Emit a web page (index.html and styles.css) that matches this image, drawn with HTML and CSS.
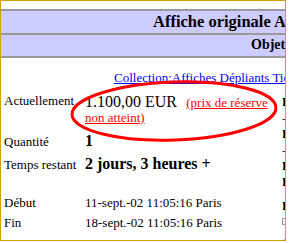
FILE: index.html
```html
<!DOCTYPE html>
<html lang="fr">
<head>
    <meta charset="UTF-8">
    <title>Affiche originale</title>
    <link rel="stylesheet" href="styles.css">
</head>
<body>
    <div class="frame">
        <div class="page">
            <div class="banner">
                <div class="banner-title">Affiche originale Air France</div>
                <div class="banner-sub">Objet n° 1658402937</div>
            </div>

            <div class="links">
                <a href="#">Collection:Affiches Dépliants Tickets</a>
            </div>

            <div class="details">
                <div class="main">
                    <div class="row row-price">
                        <div class="label">Actuellement</div>
                        <div class="value"><span class="big">1.100,00 EUR</span> <a class="reserve" href="#">(prix de réserve non atteint)</a></div>
                    </div>
                    <div class="row row-qty">
                        <div class="label">Quantité</div>
                        <div class="value"><b class="big">1</b></div>
                    </div>
                    <div class="row row-time">
                        <div class="label">Temps restant</div>
                        <div class="value"><b class="big">2 jours, 3 heures +</b></div>
                    </div>
                    <div class="row row-start">
                        <div class="label">Début</div>
                        <div class="value">11-sept.-02 11:05:16 Paris</div>
                    </div>
                    <div class="row row-end">
                        <div class="label">Fin</div>
                        <div class="value">18-sept.-02 11:05:16 Paris</div>
                    </div>
                </div>

                <div class="side">
                    <div class="side-line"><b>Enchères</b></div>
                    <div class="side-line small">- vendeur</div>
                    <div class="side-line"><b>Lieu</b></div>
                    <div class="side-line small">- France</div>
                    <div class="side-line"><b>Pays</b></div>
                    <div class="side-line"><b>Historique</b></div>
                    <div class="side-line gap"><b>Livraison</b></div>
                    <div class="side-box"></div>
                    <div class="side-icon">&#9686;</div>
                </div>
            </div>
        </div>
    </div>

    <!-- red mark drawn over the price -->
    <svg class="circle" width="290" height="243" viewBox="0 0 290 243">
        <ellipse cx="174" cy="111" rx="102" ry="29" transform="rotate(-2 174 111)"
                 fill="none" stroke="#ff0000" stroke-width="3"/>
    </svg>
</body>
</html>
```

FILE: styles.css
```css
body {
    margin: 0;
    background: #ffffff;
    font-family: "Liberation Serif", "Times New Roman", serif;
    font-size: 13px;
    color: #000000;
    position: relative;
}

.frame {
    width: 284px;
    height: 239px;
    border: 1px solid #d5a000;
    overflow: hidden;
}

.page {
    width: 600px;
    padding-top: 8px;
}

/* Title bands */
.banner {
    border-top: 2px solid #999999;
    border-bottom: 2px solid #999999;
    background: #999999;
}

.banner-title {
    background: #ccccff;
    height: 22px;
    line-height: 22px;
    font-size: 16.5px;
    font-weight: bold;
    padding-left: 152px;
    white-space: nowrap;
    margin-bottom: 2px;
}

.banner-sub {
    background: #ccccff;
    height: 19px;
    line-height: 19px;
    padding-bottom: 2px;
    font-size: 14px;
    font-weight: bold;
    padding-left: 250px;
    white-space: nowrap;
}

.links {
    margin-top: 12px;
    line-height: 15px;
    padding-left: 113px;
    white-space: nowrap;
}

a {
    color: #0000ff;
    text-decoration: underline;
}

/* Item details */
.details {
    display: flex;
}

.main {
    width: 281px;
    flex-shrink: 0;
    padding-top: 9px;
}

.row {
    display: flex;
    align-items: baseline;
    line-height: 15px;
}

.label {
    width: 81px;
    padding-left: 3px;
    flex-shrink: 0;
    white-space: nowrap;
}

.row-price .label {
    position: relative;
    top: -2px;
}

.value {
    width: 197px;
    line-height: 15px;
}

.big {
    font-size: 16px;
}

.reserve {
    color: #ff0000;
    margin-left: 6px;
}

.row-qty {
    margin-top: 8px;
}

.row-time {
    margin-top: 7px;
}

.row-start {
    margin-top: 23px;
}

.row-end {
    margin-top: 5px;
}

.row-start .value, .row-end .value, .row-time .value {
    white-space: nowrap;
}

/* Right column, mostly cut off by the frame */
.side {
    padding-top: 9px;
    line-height: 16px;
    white-space: nowrap;
}

.side-line.small {
    font-size: 11px;
}

.side-line.gap {
    margin-top: 8px;
}

.side-box {
    width: 8px;
    height: 5px;
    border: 1px solid #999999;
    margin-top: 4px;
}

.side-icon {
    color: #1a3fa8;
    margin-top: 8px;
    line-height: 14px;
}

.circle {
    position: absolute;
    top: 0;
    left: 0;
    pointer-events: none;
}
```
